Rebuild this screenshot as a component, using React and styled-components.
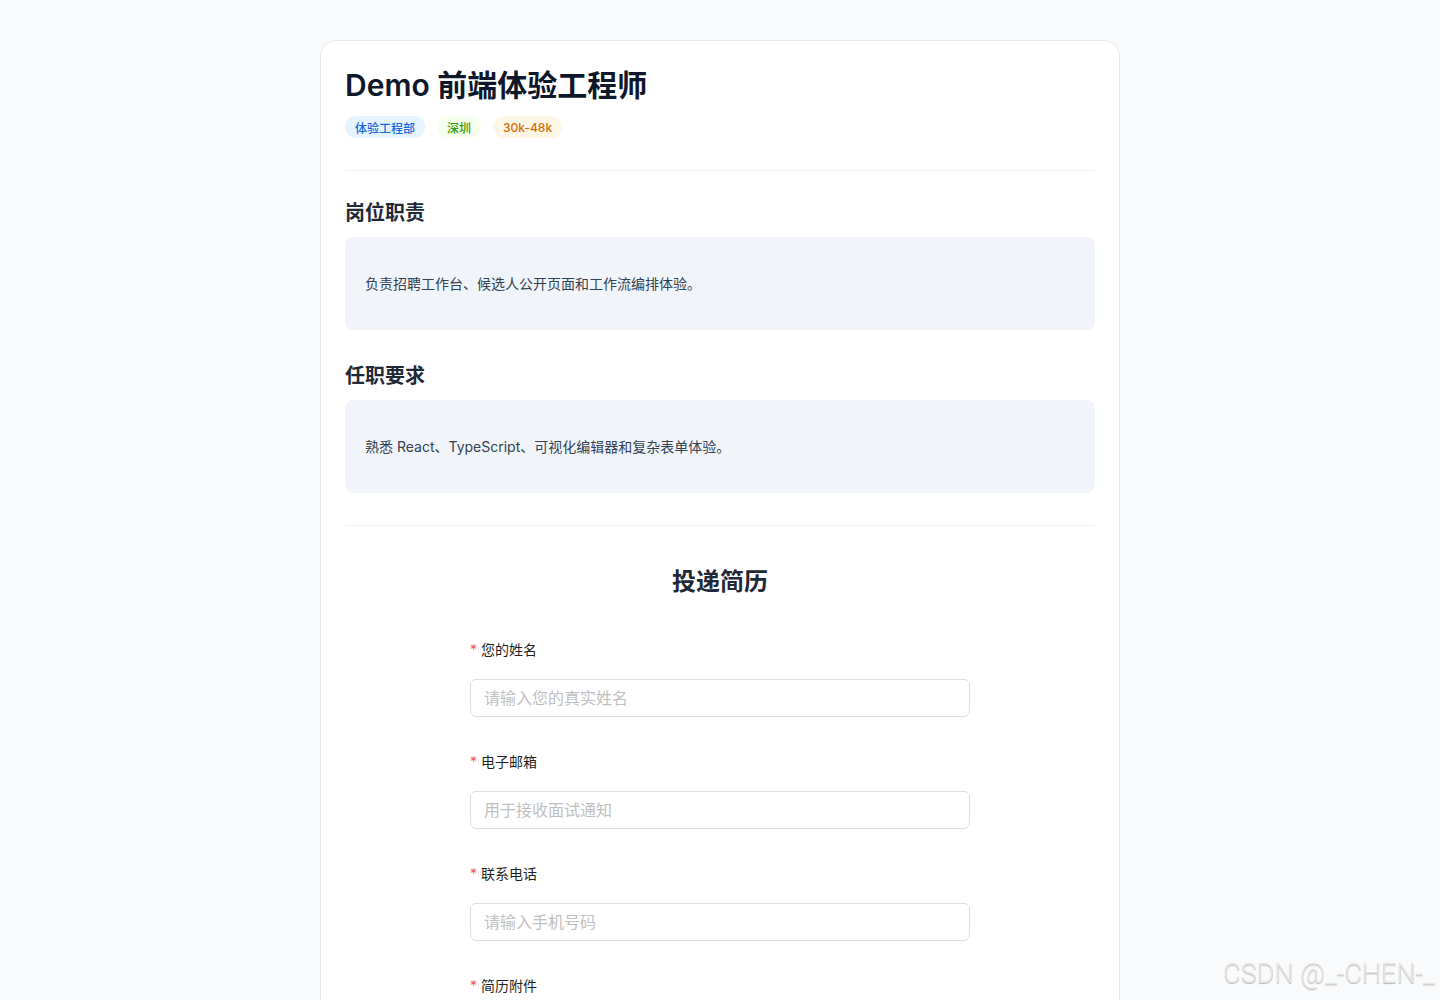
import React from "react";
import styled, { createGlobalStyle } from "styled-components";

const GlobalStyle = createGlobalStyle`
  * { box-sizing: border-box; }
  body {
    margin: 0;
    background: #f8fafc;
    font-family: Inter, "Noto Sans CJK SC", "Noto Sans", sans-serif;
    color: #1f2937;
  }
`;

const Page = styled.div`
  padding: 40px 0 60px;
  display: flex;
  justify-content: center;
`;

const Card = styled.div`
  width: 800px;
  background: #fff;
  border: 1px solid #e5e7eb;
  border-radius: 16px;
  padding: 24px 24px 40px;
`;

const Title = styled.h1`
  margin: 0;
  font-size: 30px;
  line-height: 40px;
  font-weight: 600;
  color: #0f172a;
`;

const Tags = styled.div`
  display: flex;
  gap: 12px;
  margin-top: 11px;
`;

const tagColors = {
  blue: ["#e6f4ff", "#1668dc"],
  green: ["#f6ffed", "#389e0d"],
  orange: ["#fff7e6", "#d46b08"],
};

const Tag = styled.span`
  display: inline-flex;
  align-items: center;
  height: 22px;
  padding: 0 10px;
  border-radius: 999px;
  font-size: 12px;
  font-weight: 500;
  background: ${(p) => tagColors[p.$tone][0]};
  color: ${(p) => tagColors[p.$tone][1]};
`;

const Divider = styled.hr`
  border: 0;
  border-top: 1px solid #eef0f3;
  margin: ${(p) => p.$margin || "32px 0 0"};
`;

const SectionTitle = styled.h2`
  margin: ${(p) => p.$top || "28px"} 0 10px;
  font-size: 20px;
  line-height: 28px;
  font-weight: 600;
  color: #1f2937;
`;

const InfoBox = styled.div`
  background: #f1f5f9;
  border-radius: 8px;
  padding: 36px 20px 35px;
  font-size: 14px;
  line-height: 22px;
  color: #334155;
`;

const FormTitle = styled.h3`
  margin: 40px 0 0;
  text-align: center;
  font-size: 24px;
  line-height: 32px;
  font-weight: 600;
  color: #1f2937;
`;

const Form = styled.form`
  width: 500px;
  margin: 41px auto 0;
  display: flex;
  flex-direction: column;
  gap: 34px;
`;

const Field = styled.div`
  display: flex;
  flex-direction: column;
  gap: 18px;
`;

const Label = styled.label`
  font-size: 14px;
  line-height: 22px;
  color: #1f1f1f;

  &::before {
    content: "*";
    color: #ff4d4f;
    margin-right: 4px;
  }
`;

const Input = styled.input`
  height: 38px;
  border: 1px solid #d9dee7;
  border-radius: 6px;
  padding: 0 13px;
  font-size: 16px;
  font-family: inherit;
  color: #1f2937;
  outline: none;

  &::placeholder {
    color: #bfbfbf;
  }
`;

const Upload = styled.div`
  height: 120px;
  border: 1px dashed #d9dee7;
  border-radius: 8px;
  background: #fafafa;
  display: flex;
  align-items: center;
  justify-content: center;
  font-size: 14px;
  color: #8c8c8c;
`;

const Submit = styled.button`
  height: 40px;
  border: 0;
  border-radius: 6px;
  background: #1677ff;
  color: #fff;
  font-size: 16px;
  font-family: inherit;
`;

const Watermark = styled.div`
  position: fixed;
  right: 5px;
  bottom: 10px;
  font-family: Roboto, "Liberation Sans", sans-serif;
  font-size: 27px;
  font-weight: 300;
  color: #e4e4e4;
  text-shadow: 0 1px 1px #b5b5b5;
  pointer-events: none;
`;

const fields = [
  { label: "您的姓名", placeholder: "请输入您的真实姓名" },
  { label: "电子邮箱", placeholder: "用于接收面试通知" },
  { label: "联系电话", placeholder: "请输入手机号码" },
];

export default function App() {
  return (
    <>
      <GlobalStyle />
      <Page>
        <Card>
          <Title>Demo 前端体验工程师</Title>
          <Tags>
            <Tag $tone="blue">体验工程部</Tag>
            <Tag $tone="green">深圳</Tag>
            <Tag $tone="orange">30k-48k</Tag>
          </Tags>
          <Divider />

          <SectionTitle>岗位职责</SectionTitle>
          <InfoBox>负责招聘工作台、候选人公开页面和工作流编排体验。</InfoBox>

          <SectionTitle $top="32px">任职要求</SectionTitle>
          <InfoBox>熟悉 React、TypeScript、可视化编辑器和复杂表单体验。</InfoBox>

          <Divider />

          <FormTitle>投递简历</FormTitle>
          <Form onSubmit={(e) => e.preventDefault()}>
            {fields.map((f) => (
              <Field key={f.label}>
                <Label>{f.label}</Label>
                <Input placeholder={f.placeholder} />
              </Field>
            ))}
            <Field>
              <Label>简历附件</Label>
              <Upload>点击或拖拽文件到此处上传（PDF / Word）</Upload>
            </Field>
            <Submit type="submit">提交申请</Submit>
          </Form>
        </Card>
      </Page>
      <Watermark>CSDN @_-CHEN-_</Watermark>
    </>
  );
}
